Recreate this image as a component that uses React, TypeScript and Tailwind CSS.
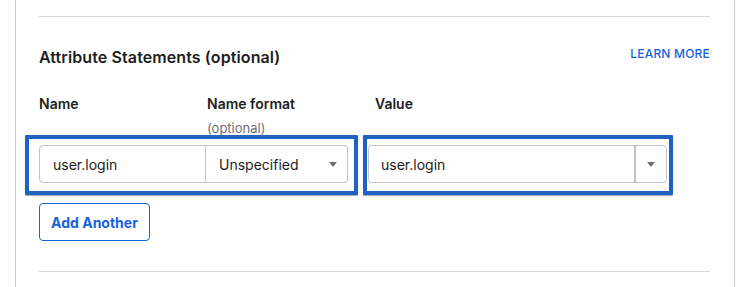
import React from "react";

function Caret() {
  return (
    <svg width="8" height="5" viewBox="0 0 8 5" className="shrink-0">
      <path d="M0 0 L8 0 L4 5 Z" fill="#6e6e78" />
    </svg>
  );
}

export default function App() {
  return (
    <div
      className="w-[749px] h-[287px] bg-white overflow-hidden pl-[15px] text-[#1d1d21]"
      style={{ fontFamily: "Inter, 'Noto Sans', sans-serif" }}
    >
      <div className="relative w-[720px] h-full border-l border-r border-[#c9c9ce] pl-[23px] pr-[24px] pt-[16px]">
        <div className="border-t border-[#d7d7dc]" />

        <div className="flex justify-between items-start mt-[30px]">
          <h2 className="text-[16px] leading-[20px] font-semibold tracking-[0.1px]">
            Attribute Statements (optional)
          </h2>
          <a className="text-[12px] leading-[14px] font-medium text-[#1662dd] tracking-[0.2px]">
            LEARN MORE
          </a>
        </div>

        <div className="flex mt-[27px] h-[42px]">
          <div className="w-[168px] text-[14px] leading-[20px] font-semibold">Name</div>
          <div className="w-[168px] flex flex-col">
            <div className="text-[14px] leading-[20px] font-semibold">Name format</div>
            <div className="text-[13px] leading-[16px] text-[#6e6e78] mt-[6px]">(optional)</div>
          </div>
          <div className="text-[14px] leading-[20px] font-semibold">Value</div>
        </div>

        <div className="flex mt-[9px] h-[38px] text-[14px]">
          <div className="flex w-[309px]">
            <div className="w-[167px] h-full border border-[#c1c1c8] rounded-l-[4px] flex items-center pl-[13px]">
              user.login
            </div>
            <div className="flex-1 h-full border border-l-0 border-[#c1c1c8] rounded-r-[4px] flex items-center justify-between pl-[13px] pr-[10px]">
              <span>Unspecified</span>
              <Caret />
            </div>
          </div>
          <div className="ml-[20px] w-[299px] h-full border border-[#c1c1c8] rounded-[4px] flex">
            <div className="w-[267px] h-full flex items-center pl-[12px] border-r-2 border-[#c1c1c8]">
              user.login
            </div>
            <div className="flex-1 flex items-center justify-center">
              <Caret />
            </div>
          </div>
        </div>

        <button className="mt-[20px] h-[38px] w-[111px] border border-[#1662dd] rounded-[4px] text-[#1662dd] text-[14px] font-bold flex items-center justify-center">
          Add Another
        </button>

        <div className="border-t border-[#d7d7dc] mt-[30px]" />

        <div className="absolute left-[9px] top-[135px] w-[333px] h-[60px] border-4 border-[#1f62c1] rounded-[1px] shadow-[0_1px_1px_rgba(0,0,0,0.35)]" />
        <div className="absolute left-[347px] top-[135px] w-[310px] h-[60px] border-4 border-[#1f62c1] rounded-[1px] shadow-[0_1px_1px_rgba(0,0,0,0.35)]" />
      </div>
    </div>
  );
}
